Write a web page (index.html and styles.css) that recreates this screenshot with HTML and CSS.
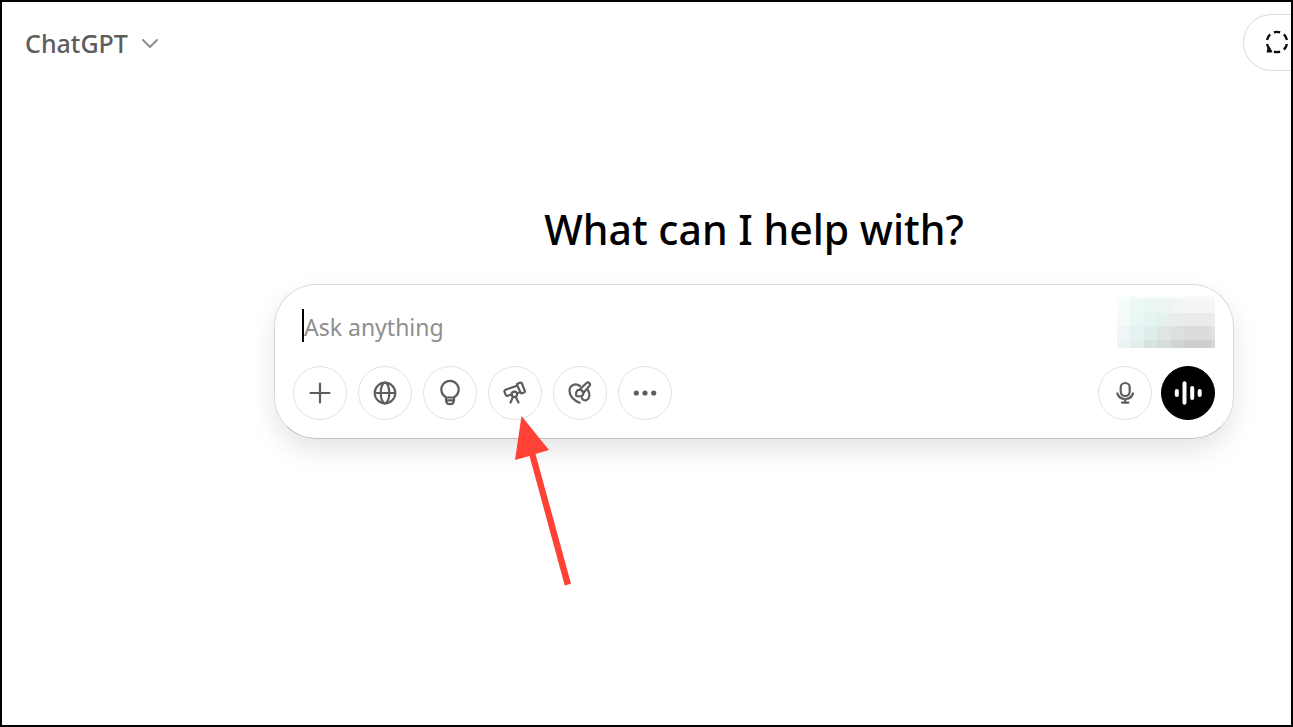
FILE: index.html
```html
<!DOCTYPE html>
<html lang="en">
<head>
<meta charset="utf-8">
<title>ChatGPT</title>
<link rel="stylesheet" href="styles.css">
</head>
<body>
<div class="app">
  <header class="topbar">
    <button class="model" type="button">ChatGPT
      <svg class="chevron" viewBox="0 0 18 12" aria-hidden="true"><path d="M2 3l7 7 7-7"/></svg>
    </button>
    <button class="temporary" type="button" aria-label="Temporary chat">
      <svg viewBox="0 0 26 26" aria-hidden="true">
        <circle cx="13" cy="12" r="10.200" pathLength="80" stroke-dasharray="8 5.333" stroke-dashoffset="-2.667"/>
        <path class="tail" d="M2.500 22.500l1.300-5.500 4.700 4-1 1.500z"/>
      </svg>
    </button>
  </header>
  <main class="main">
    <h1 class="title">What can I help with?</h1>
    <form class="composer">
      <div class="prompt-row">
        <input class="prompt" type="text" placeholder="Ask anything" aria-label="Ask anything">
        <svg class="mosaic" viewBox="0 0 98 52" aria-hidden="true">
          <g><path fill="#f5fdfc" d="M0 0h13v17H0z"/><path fill="#ebf8f6" d="M13 0h14v17H13z"/><path fill="#eaf7f5" d="M27 0h13v17H27z"/><path fill="#ebf6f4" d="M40 0h14v17H40z"/><path fill="#f2f5f5" d="M54 0h13v17H54z"/><path fill="#f4f5f5" d="M67 0h31v17H67z"/></g>
          <g><path fill="#f4fcfa" d="M0 17h13v13H0z"/><path fill="#e7f7f3" d="M13 17h14v13H13z"/><path fill="#e4f4f0" d="M27 17h13v13H27z"/><path fill="#e6f0ee" d="M40 17h14v13H40z"/><path fill="#e9eded" d="M54 17h13v13H54z"/><path fill="#e9ebeb" d="M67 17h31v13H67z"/></g>
          <g><path fill="#eff7f6" d="M0 30h13v14H0z"/><path fill="#e4f2f1" d="M13 30h14v14H13z"/><path fill="#dfeeea" d="M27 30h13v14H27z"/><path fill="#dee6e4" d="M40 30h14v14H40z"/><path fill="#dbe1e0" d="M54 30h13v14H54z"/><path fill="#dbdddd" d="M67 30h31v14H67z"/></g>
          <g><path fill="#ecf4f3" d="M0 44h13v8H0z"/><path fill="#e2eeeb" d="M13 44h14v8H13z"/><path fill="#d6e5e0" d="M27 44h13v8H27z"/><path fill="#d6dedb" d="M40 44h14v8H40z"/><path fill="#d0d5d4" d="M54 44h13v8H54z"/><path fill="#cdcece" d="M67 44h31v8H67z"/></g>
          <path fill="#fff" opacity=".5" d="M0 0h98v3H0z"/>
          <path fill="#fff" opacity=".15" d="M94 3h4v49h-4z"/>
        </svg>
      </div>
      <div class="actions">
        <button class="round" type="button" aria-label="Add files">
          <svg viewBox="0 0 28 28" aria-hidden="true"><path d="M14 4.500v19M4.500 14h19"/></svg>
        </button>
        <button class="round" type="button" aria-label="Search">
          <svg viewBox="0 0 28 28" aria-hidden="true"><circle cx="14" cy="14" r="10.300"/><ellipse cx="14" cy="14" rx="4.300" ry="10.300"/><path d="M4 14h20"/></svg>
        </button>
        <button class="round" type="button" aria-label="Reason">
          <svg viewBox="0 0 28 28" aria-hidden="true"><path d="M10 18.300a8.700 8.700 0 1 1 8 0v2.700c0 2.600-1.700 4.200-4 4.200s-4-1.600-4-4.200zM10 18.500h8M10 21.300h8"/></svg>
        </button>
        <button class="round" type="button" aria-label="Deep research">
          <svg viewBox="0 0 28 28" aria-hidden="true"><path d="M16.900 4.600l2.200-.9q1.300-.5 1.800.8l2.800 7.200q.5 1.300-.8 1.800l-1.700.6q-1.300.5-1.800-.8l-3.200-7q-.6-1.200.7-1.700zM16 6.700L4.700 10.700q-1.700.7-1.100 2.300l1 2.700q.6 1.500 2.200 1l3.700-1.400M16.200 14.200l3-1"/><circle cx="13.400" cy="15.300" r="2.700"/><path d="M12 18l-2.500 5.500M14.700 18l2.800 5.500"/></svg>
        </button>
        <button class="round" type="button" aria-label="Create image">
          <svg viewBox="0 0 28 28" aria-hidden="true"><path d="M13.700 23.700C7.500 21.600 3.400 16.800 3.500 11.800 3.700 5.700 9.500 3.900 14 7M21.800 11c2.700 3.600 1.900 8.500-1.100 9.900-1.900.9-4.300.2-4.900-2.200"/><path d="M13.400 10.700l6.900-6.500c2.200-2 4.900.6 3.100 2.800L17.300 14M13.400 10.700c2 .3 3.600 1.600 3.900 3.300.2 3-2.700 4-6.900 3-.9-3.300.2-6 3-6.300z"/></svg>
        </button>
        <button class="round" type="button" aria-label="More tools">
          <svg class="dots" viewBox="0 0 28 28" aria-hidden="true"><circle cx="5.300" cy="14" r="2.600"/><circle cx="14" cy="14" r="2.600"/><circle cx="22.700" cy="14" r="2.600"/></svg>
        </button>
        <div class="voice-group">
          <button class="round" type="button" aria-label="Dictate">
            <svg viewBox="0 0 28 28" aria-hidden="true"><rect x="9.700" y="4" width="9" height="13" rx="4.500"/><path d="M6.300 14.500c1.300 3.400 4.300 5.500 7.900 5.500s6.600-2.100 7.900-5.500M14.200 20v3.500M11 23.600h6.400"/></svg>
          </button>
          <button class="round voice" type="button" aria-label="Use voice mode">
            <svg viewBox="0 0 28 28" aria-hidden="true"><path d="M2.800 12v4M10.500 4.200v19.600M18.200 9v10M25.700 12v4"/></svg>
          </button>
        </div>
        <svg class="arrow" viewBox="0 0 40 172" aria-hidden="true"><path d="M6.500 0L34 34l-13.500 4L56 167.500l-6.200 2.200L14.500 40 0 44z"/></svg>
      </div>
    </form>
  </main>
</div>
</body>
</html>
```
FILE: styles.css
```css
* { box-sizing: border-box; }

body {
  margin: 0;
  background: #fff;
  color: #000;
  font-family: "Segoe UI", "Noto Sans", "Open Sans", sans-serif;
}

button, input {
  font: inherit;
  color: inherit;
}

button {
  padding: 0;
  border: 0;
  background: none;
  cursor: pointer;
}

svg {
  display: block;
  fill: none;
  stroke: currentColor;
  stroke-linecap: round;
  stroke-linejoin: round;
}

.app {
  min-height: 100vh;
  border: 2px solid #000;
  overflow: hidden;
}

.topbar {
  display: flex;
  align-items: center;
  justify-content: space-between;
  padding: 12px 0 0 23px;
}

.model {
  display: flex;
  align-items: center;
  gap: 13px;
  color: #5d5d5d;
  font-size: 25px;
  font-weight: 500;
  line-height: 32px;
}

.chevron {
  width: 18px;
  height: 12px;
  color: #8f8f8f;
  stroke-width: 2;
}

.temporary {
  display: flex;
  align-items: center;
  flex: none;
  width: 88px;
  height: 57px;
  margin-right: -40px;
  padding-left: 20px;
  border: 1px solid #d9d9d9;
  border-radius: 29px;
  color: #0d0d0d;
}

.temporary svg {
  width: 26px;
  height: 26px;
  stroke-width: 2.3;
}

.temporary circle {
  stroke-linecap: butt;
}

.tail {
  fill: currentColor;
  stroke: none;
}

.main {
  padding: 129px 57px 0 272px;
}

.title {
  margin: 0 0 26px;
  font-size: 41px;
  font-weight: 500;
  line-height: 58px;
  text-align: center;
}

.composer {
  padding: 11px 18px 18px;
  border: 1px solid #d9d9d9;
  border-bottom-color: #c0c0c0;
  border-radius: 42px;
  box-shadow: 0 12px 26px rgba(0, 0, 0, 0.1);
}

.prompt-row {
  display: flex;
  align-items: flex-start;
  margin-bottom: 18px;
}

.prompt {
  flex: 1;
  min-width: 0;
  height: 33px;
  margin: 13px 0 0 9px;
  padding: 3px 0 0;
  border: 0;
  border-left: 2px solid #000;
  outline: 0;
  background: none;
  font-size: 23px;
}

.prompt::placeholder {
  color: #8f8f8f;
  opacity: 1;
}

.mosaic {
  width: 98px;
  height: 52px;
  stroke: none;
  shape-rendering: crispEdges;
}

.actions {
  position: relative;
  display: flex;
  gap: 11px;
}

.round {
  display: flex;
  align-items: center;
  justify-content: center;
  flex: none;
  width: 54px;
  height: 54px;
  border: 1px solid #e3e3e3;
  border-radius: 50%;
  color: #5d5d5d;
}

.round svg {
  width: 28px;
  height: 28px;
  stroke-width: 2.2;
}

.round .dots {
  fill: currentColor;
  stroke: none;
}

.voice-group {
  display: flex;
  gap: 9px;
  margin-left: auto;
}

.voice {
  border-color: #000;
  background: #000;
  color: #fff;
}

.voice svg {
  stroke-width: 4;
}

.arrow {
  position: absolute;
  top: 50px;
  left: 222px;
  width: 40px;
  height: 172px;
  overflow: visible;
  fill: #ff4136;
  stroke: none;
  pointer-events: none;
}
```
